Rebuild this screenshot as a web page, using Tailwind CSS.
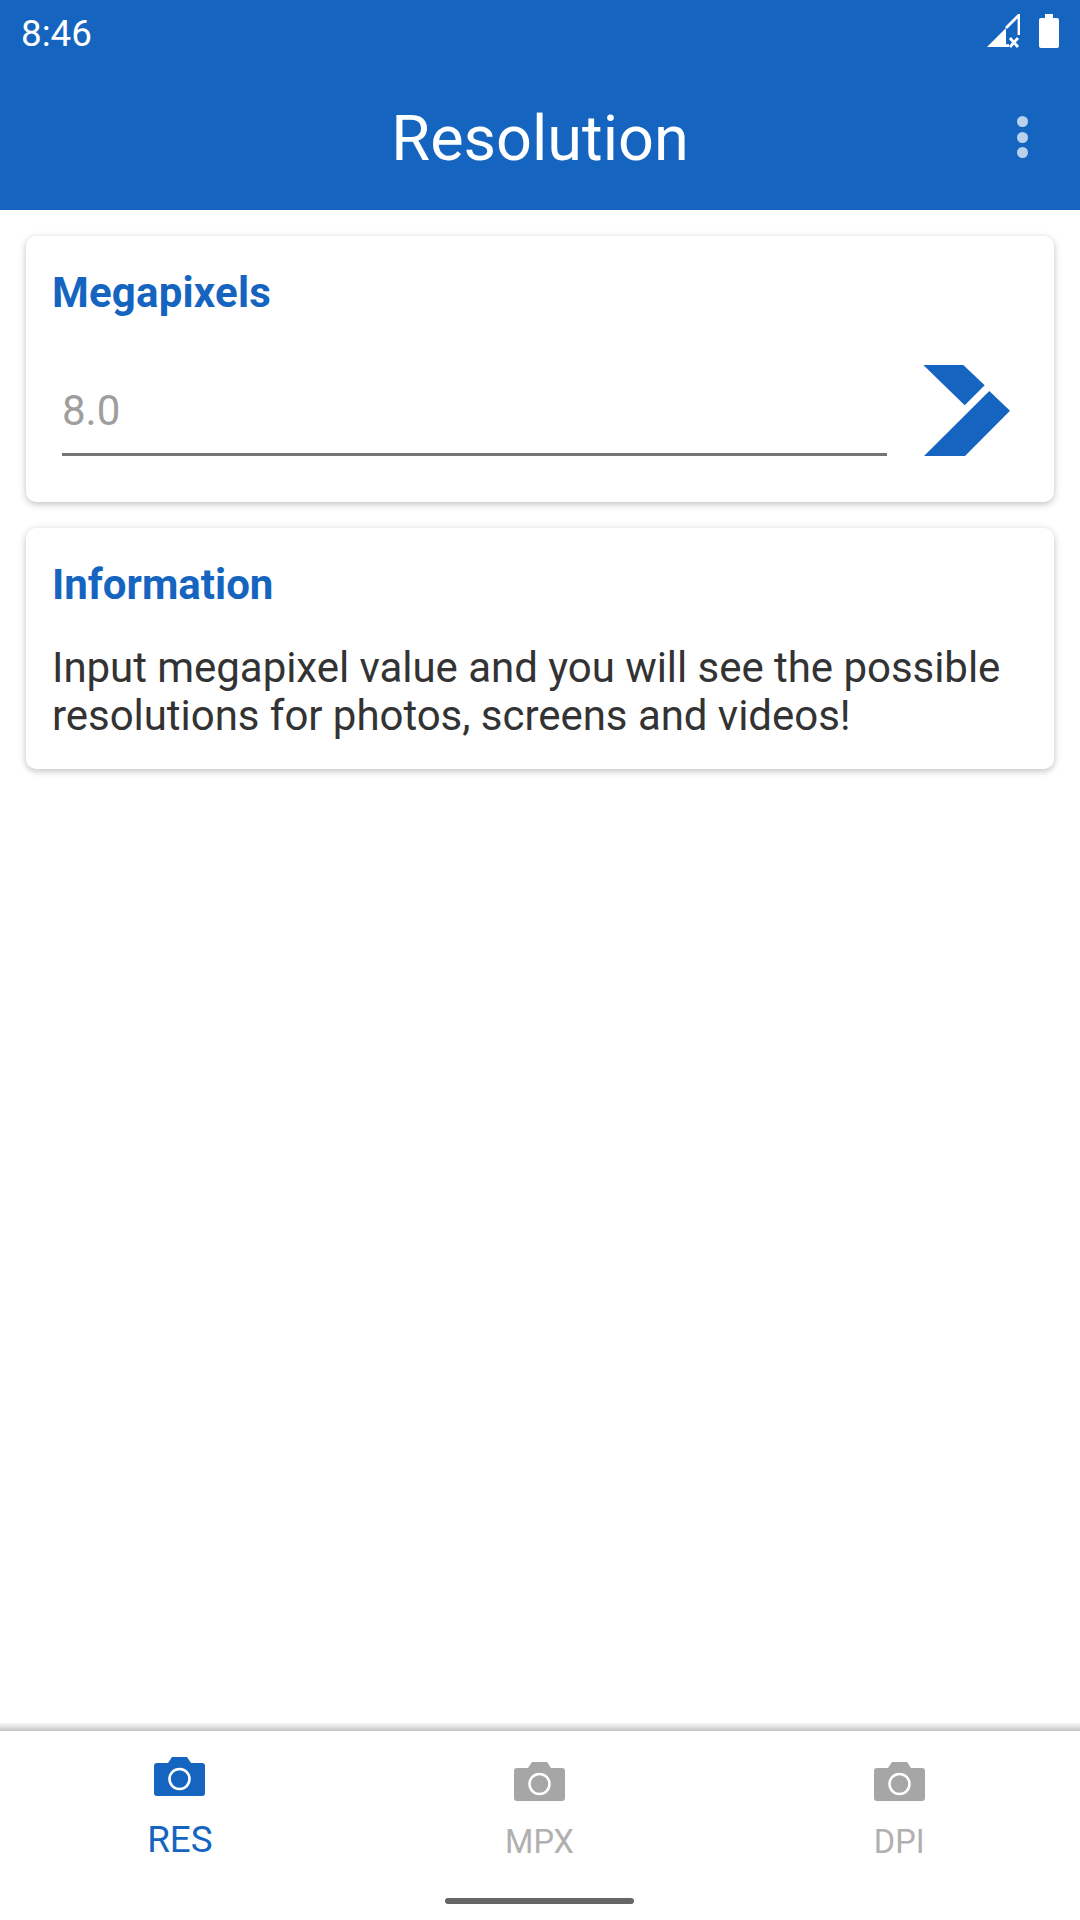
<!DOCTYPE html>
<html>
<head>
<meta charset="utf-8">
<script src="https://cdn.jsdelivr.net/npm/@tailwindcss/browser@4"></script>
</head>
<body class="m-0 bg-white">
<div class="w-[1080px] h-[1920px] flex flex-col bg-white font-['Roboto',sans-serif] overflow-hidden">
  <header class="h-[210px] shrink-0 bg-[#1565c0] flex flex-col">
    <div class="h-[66px] flex items-center justify-between pl-[21px] pr-[21px]">
      <span class="text-[36.75px] leading-[44px] text-white pt-[2px]">8:46</span>
      <div class="flex items-start gap-[19px] h-[66px] pt-[14px]">
        <svg class="w-[33px] h-[34px]" viewBox="0 0 33 34"><path d="M0 33 L19 14 V33 Z" fill="#fff"/><path d="M19 14 L32 1 V21" fill="none" stroke="#fff" stroke-width="2.8"/><path d="M19 31.6 H22" stroke="#fff" stroke-width="2.8"/><path d="M23 24 L31 33 M31 24 L23 33" stroke="#fff" stroke-width="2.8"/></svg>
        <svg class="w-[20px] h-[34px]" viewBox="0 0 20 34"><path d="M6 0 H14 V4 H18 Q20 4 20 6 V32 Q20 34 18 34 H2 Q0 34 0 32 V6 Q0 4 2 4 H6 Z" fill="#fff"/></svg>
      </div>
    </div>
    <div class="relative flex-1 flex items-center justify-center pt-[2px]">
      <h1 class="text-[63px] leading-[76px] text-white font-normal">Resolution</h1>
      <div class="absolute left-[1017px] top-[50px] flex flex-col gap-[4.5px]">
        <span class="block w-[11px] h-[11px] rounded-full bg-white/70"></span>
        <span class="block w-[11px] h-[11px] rounded-full bg-white/70"></span>
        <span class="block w-[11px] h-[11px] rounded-full bg-white/70"></span>
      </div>
    </div>
  </header>

  <main class="flex-1 px-[26px] pt-[26px] flex flex-col gap-[26px]">
    <section class="h-[266px] rounded-[10px] bg-white shadow-[0_2px_7px_rgba(0,0,0,0.25)] pl-[26px] pt-[33px] flex flex-col">
      <h2 class="text-[42px] leading-[48px] font-bold tracking-[0.2px] text-[#1565c0]">Megapixels</h2>
      <div class="flex items-start mt-[50px] pl-[10px]">
        <div class="w-[825px] h-[89px] border-b-[3px] border-[#757575] pt-[12px]">
          <span class="text-[42px] leading-[64px] text-[#9e9e9e]">8.0</span>
        </div>
        <svg class="w-[90px] h-[94px] ml-[34px] -mt-[4px]" viewBox="921 363 90 94"><path d="M923.3 365 H963.3 L984.7 385.3 L964.7 405.3 Z" fill="#1565c0"/><path d="M989.3 391 L1010 410.7 L965 456 H924 Z" fill="#1565c0"/></svg>
      </div>
    </section>
    <section class="h-[241px] rounded-[10px] bg-white shadow-[0_2px_7px_rgba(0,0,0,0.25)] px-[26px] pt-[33px]">
      <h2 class="text-[42px] leading-[48px] font-bold text-[#1565c0]">Information</h2>
      <p class="mt-[35px] text-[42px] leading-[48px] tracking-[-0.04px] text-[#333333]">Input megapixel value and you will see the possible resolutions for photos, screens and videos!</p>
    </section>
  </main>

  <div class="h-[9px] shrink-0 bg-gradient-to-b from-white to-[#c4c4c4]"></div>
  <nav class="h-[189px] shrink-0 relative grid grid-cols-3 bg-white pr-[1px]">
    <div class="flex flex-col items-center pt-[26px]">
      <svg class="w-[51px] h-[39px]" viewBox="0 0 51 39"><path d="M14 6 L18 0 H33 L37 6 H48 Q51 6 51 9 V36 Q51 39 48 39 H3 Q0 39 0 36 V9 Q0 6 3 6 Z" fill="#1565c0"/><circle cx="25.5" cy="22" r="10" fill="none" stroke="#fff" stroke-width="2.6"/></svg>
      <span class="mt-[28px] text-[36.75px] leading-[32px] text-[#1565c0]">RES</span>
    </div>
    <div class="flex flex-col items-center pt-[31px]">
      <svg class="w-[51px] h-[39px]" viewBox="0 0 51 39"><path d="M14 6 L18 0 H33 L37 6 H48 Q51 6 51 9 V36 Q51 39 48 39 H3 Q0 39 0 36 V9 Q0 6 3 6 Z" fill="#a6a6a6"/><circle cx="25.5" cy="22" r="10" fill="none" stroke="#fff" stroke-width="2.6"/></svg>
      <span class="mt-[25px] text-[32.5px] leading-[32px] text-[#b0b0b0]">MPX</span>
    </div>
    <div class="flex flex-col items-center pt-[31px]">
      <svg class="w-[51px] h-[39px]" viewBox="0 0 51 39"><path d="M14 6 L18 0 H33 L37 6 H48 Q51 6 51 9 V36 Q51 39 48 39 H3 Q0 39 0 36 V9 Q0 6 3 6 Z" fill="#a6a6a6"/><circle cx="25.5" cy="22" r="10" fill="none" stroke="#fff" stroke-width="2.6"/></svg>
      <span class="mt-[25px] text-[32.5px] leading-[32px] text-[#b0b0b0]">DPI</span>
    </div>
    <div class="absolute left-[445px] top-[167px] w-[189px] h-[6px] rounded-full bg-[#666666]"></div>
  </nav>
</div>
</body>
</html>
